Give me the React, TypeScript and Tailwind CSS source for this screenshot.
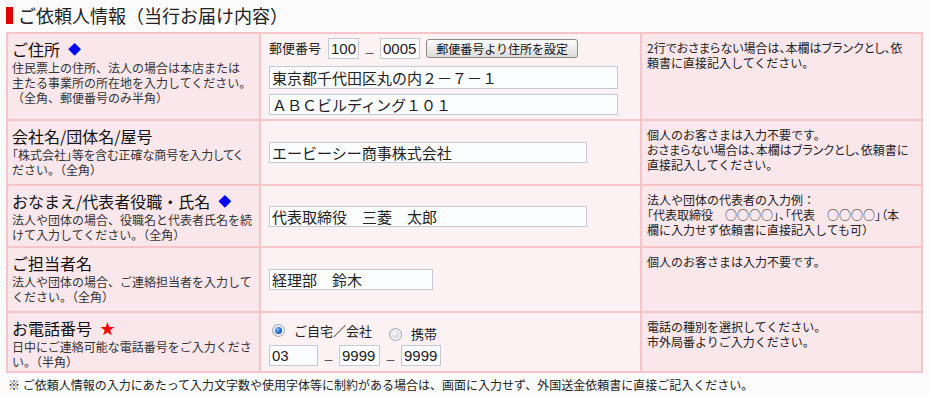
import type { ReactNode } from 'react';

const font = "font-['Noto_Sans_CJK_JP','Liberation_Sans',sans-serif]";
const palt = "[font-feature-settings:'palt']";

function Input({ value, width, digits }: { value: string; width: string; digits?: boolean }) {
  return (
    <input
      readOnly
      value={value}
      className={`${width} h-[21px] border border-[#c3cad6] bg-[#fcfdff] px-[2px] text-[15px] leading-[19px] text-[#222] outline-none ${
        digits ? "font-['Liberation_Sans',sans-serif]" : ''
      }`}
    />
  );
}

function Dash() {
  return <span className="mx-[5px] translate-y-[5px] text-[11px] text-[#333]">－</span>;
}

function Radio({ checked, label }: { checked?: boolean; label: string }) {
  return (
    <span className="inline-flex items-center">
      <span className="flex h-[13px] w-[13px] items-center justify-center rounded-full border border-[#9aa3b2] bg-gradient-to-br from-[#e4e6ea] to-[#fafafa]">
        <span
          className={`h-[7px] w-[7px] rounded-full ${
            checked
              ? 'bg-[radial-gradient(circle_at_35%_35%,#7fc0ff,#1b5fc9_60%,#0c3a8a)]'
              : 'bg-[radial-gradient(circle_at_35%_35%,#ffffff,#d2d2d2_70%,#bcbcbc)]'
          }`}
        />
      </span>
      <span className="ml-[9px] text-[13px] leading-[16px] text-[#222]">{label}</span>
    </span>
  );
}

interface RowProps {
  label: string;
  mark?: 'diamond' | 'star';
  desc: ReactNode;
  field: ReactNode;
  note: ReactNode;
  height: string;
  first?: boolean;
}

function Row({ label, mark, desc, field, note, height, first }: RowProps) {
  return (
    <div className={`grid grid-cols-[251px_381px_1fr] ${height} ${first ? '' : 'border-t-2 border-[#f7c4cc]'}`}>
      <div className="bg-[#fae7eb] pl-[4px] pt-[5px]">
        <div className="flex items-center text-[16px] leading-[20px] text-[#111]">
          {label}
          {mark === 'diamond' && <span className="ml-[8px] text-[13px] text-[#0000ff]">◆</span>}
          {mark === 'star' && <span className="ml-[8px] text-[15px] text-[#ff0000]">★</span>}
        </div>
        <div className="mt-[1px] whitespace-nowrap text-[12px] leading-[15px] text-[#333]">{desc}</div>
      </div>
      <div className="flex items-center border-l-2 border-[#f7c4cc] bg-[#fcf1f3] pl-[8px]">{field}</div>
      <div className="whitespace-nowrap border-l-2 border-[#f7c4cc] bg-[#fae7eb] pl-[5px] pt-[6px] text-[12px] leading-[15px] text-[#222]">
        {note}
      </div>
    </div>
  );
}

export default function App() {
  return (
    <div className={`h-[397px] w-[929px] bg-[#fbfbfb] ${font}`}>
      <div className="flex items-center pl-[6px] pt-[4px]">
        <span className="h-[17px] w-[7px] bg-[#e00000]" />
        <h2 className="ml-[5px] text-[18px] leading-[22px] font-normal text-[#222]">ご依頼人情報（当行お届け内容）</h2>
      </div>

      <div className="ml-[6px] mt-[6px] w-[917px] border-2 border-[#f7c4cc]">
        <Row
          first
          height="h-[85px]"
          label="ご住所"
          mark="diamond"
          desc={
            <>
              住民票上の住所、法人の場合は本店または
              <br />
              主たる事業所の所在地を入力してください。
              <br />
              （全角、郵便番号のみ半角）
            </>
          }
          field={
            <div className="flex flex-col">
              <div className="flex items-center">
                <span className="mr-[7px] text-[13px] text-[#222]">郵便番号</span>
                <Input value="100" width="w-[31px]" digits />
                <Dash />
                <Input value="0005" width="w-[40px]" digits />
                <button
                  type="button"
                  className="ml-[6px] h-[19px] w-[152px] rounded-[3px] border border-[#8a8a8a] bg-gradient-to-b from-[#fdfdfd] to-[#dcdcdc] text-[12px] leading-[17px] text-[#111]"
                >
                  郵便番号より住所を設定
                </button>
              </div>
              <div className="mt-[6px]">
                <Input value="東京都千代田区丸の内２－７－１" width="w-[349px] h-[23px]" />
              </div>
              <div className="mt-[3px]">
                <Input value="ＡＢＣビルディング１０１" width="w-[349px]" />
              </div>
            </div>
          }
          note={
            <>
              <span className={palt}>2行でおさまらない場合は、本欄はブランクとし、依</span>
              <br />
              頼書に直接記入してください。
            </>
          }
        />
        <Row
          height="h-[65px]"
          label="会社名/団体名/屋号"
          desc={
            <>
              <span className={palt}>「株式会社」等を含む正確な商号を入力してく</span>
              <br />
              ださい。（全角）
            </>
          }
          field={<Input value="エービーシー商事株式会社" width="w-[318px]" />}
          note={
            <>
              個人のお客さまは入力不要です。
              <br />
              <span className={palt}>おさまらない場合は、本欄はブランクとし、依頼書に</span>
              <br />
              直接記入してください。
            </>
          }
        />
        <Row
          height="h-[62px]"
          label="おなまえ/代表者役職・氏名"
          mark="diamond"
          desc={
            <>
              法人や団体の場合、役職名と代表者氏名を続
              <br />
              けて入力してください。（全角）
            </>
          }
          field={<Input value="代表取締役　三菱　太郎" width="w-[318px]" />}
          note={
            <>
              法人や団体の代表者の入力例：
              <br />
              <span className={palt}>「代表取締役　○○○○」、「代表　○○○○」（本</span>
              <br />
              欄に入力せず依頼書に直接記入しても可）
            </>
          }
        />
        <Row
          height="h-[65px]"
          label="ご担当者名"
          desc={
            <>
              法人や団体の場合、ご連絡担当者を入力して
              <br />
              ください。（全角）
            </>
          }
          field={<Input value="経理部　鈴木" width="w-[164px]" />}
          note={<>個人のお客さまは入力不要です。</>}
        />
        <Row
          height="h-[60px]"
          label="お電話番号"
          mark="star"
          desc={
            <>
              日中にご連絡可能な電話番号をご入力くださ
              <br />
              い。（半角）
            </>
          }
          field={
            <div className="flex flex-col">
              <div className="flex items-center pl-[3px]">
                <Radio checked label="ご自宅／会社" />
                <span className="ml-[17px]">
                  <Radio label="携帯" />
                </span>
              </div>
              <div className="mt-[2px] flex items-center">
                <Input value="03" width="w-[49px]" digits />
                <Dash />
                <Input value="9999" width="w-[41px]" digits />
                <Dash />
                <Input value="9999" width="w-[40px]" digits />
              </div>
            </div>
          }
          note={
            <>
              電話の種別を選択してください。
              <br />
              市外局番よりご入力ください。
            </>
          }
        />
      </div>

      <p className="ml-[8px] mt-[4px] text-[12px] leading-[15px] text-[#222]">
        ※ ご依頼人情報の入力にあたって入力文字数や使用字体等に制約がある場合は、画面に入力せず、外国送金依頼書に直接ご記入ください。
      </p>
    </div>
  );
}
